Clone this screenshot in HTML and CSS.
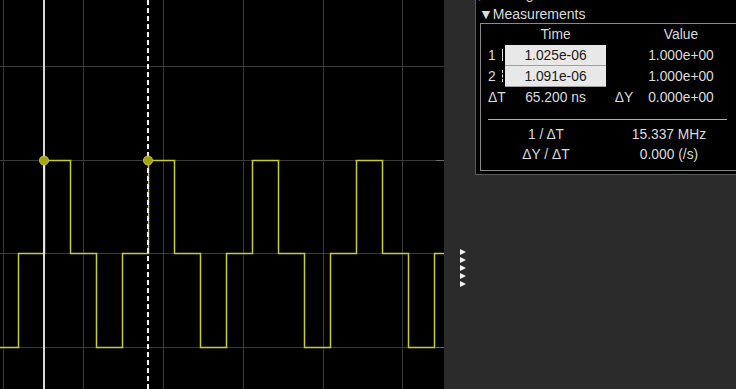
FILE: index.html
```html
<!DOCTYPE html>
<html lang="en">
<head>
    <meta charset="UTF-8">
    <meta name="viewport" content="width=device-width, initial-scale=1.0">
    <title>Scope Measurements</title>
    <link rel="stylesheet" href="styles.css">
</head>
<body>
    <div class="app">
        <svg class="plot" width="444" height="389" viewBox="0 0 444 389">
            <rect x="0" y="0" width="444" height="389" fill="#000"/>
            <g stroke="#3a3a3a" stroke-width="1">
                <line x1="3.5" y1="0" x2="3.5" y2="389"/>
                <line x1="83.5" y1="0" x2="83.5" y2="389"/>
                <line x1="163.5" y1="0" x2="163.5" y2="389"/>
                <line x1="243.5" y1="0" x2="243.5" y2="389"/>
                <line x1="323.5" y1="0" x2="323.5" y2="389"/>
                <line x1="402.5" y1="0" x2="402.5" y2="389"/>
                <line x1="0" y1="66.5" x2="444" y2="66.5"/>
                <line x1="0" y1="160.5" x2="444" y2="160.5"/>
                <line x1="0" y1="253.5" x2="444" y2="253.5"/>
                <line x1="0" y1="347.5" x2="444" y2="347.5"/>
            </g>
            <g stroke="#6a6a6a" stroke-width="1">
                <line x1="436" y1="160.5" x2="444" y2="160.5"/>
                <line x1="436" y1="253.5" x2="444" y2="253.5"/>
                <line x1="436" y1="347.5" x2="444" y2="347.5"/>
            </g>
            <path d="M0,347.5 H18.5 V253.5 H44.5 V160.5 H70.5 V253.5 H96.5 V347.5 H122.5 V253.5 H148.5 V160.5 H174.5 V253.5 H200.5 V347.5 H226.5 V253.5 H252.5 V160.5 H278.5 V253.5 H304.5 V347.5 H330.5 V253.5 H356.5 V160.5 H382.5 V253.5 H408.5 V347.5 H434.5 V253.5 H444"
                  fill="none" stroke="#c9c93a" stroke-width="1.5"/>
            <line x1="44" y1="0" x2="44" y2="389" stroke="#f0f0f0" stroke-width="1.8"/>
            <line x1="148" y1="0" x2="148" y2="389" stroke="#f0f0f0" stroke-width="2" stroke-dasharray="5 3"/>
            <circle cx="44" cy="160.5" r="4.5" fill="#a3a314" stroke="#c9c93a" stroke-width="1"/>
            <circle cx="148" cy="160.5" r="4.5" fill="#a3a314" stroke="#c9c93a" stroke-width="1"/>
        </svg>

        <div class="gutter">
            <span class="marker"></span>
            <span class="marker"></span>
            <span class="marker"></span>
            <span class="marker"></span>
            <span class="marker"></span>
        </div>

        <div class="side">
            <div class="panel">
                <div class="section-title">&#9654;Settings</div>
                <div class="section-title">&#9660;Measurements</div>

                <div class="meas">
                    <div class="meas-grid">
                        <span></span>
                        <span class="head">Time</span>
                        <span></span>
                        <span class="head">Value</span>

                        <span class="lbl">1<i class="cur solid"></i></span>
                        <span class="field">1.025e-06</span>
                        <span></span>
                        <span class="val">1.000e+00</span>

                        <span class="lbl">2<i class="cur dashed"></i></span>
                        <span class="field">1.091e-06</span>
                        <span></span>
                        <span class="val">1.000e+00</span>

                        <span class="lbl">&Delta;T</span>
                        <span class="val">65.200 ns</span>
                        <span class="val">&Delta;Y</span>
                        <span class="val">0.000e+00</span>
                    </div>

                    <div class="sep"></div>

                    <div class="rate-grid">
                        <span>1 / &Delta;T</span>
                        <span>15.337 MHz</span>
                        <span>&Delta;Y / &Delta;T</span>
                        <span>0.000 (/s)</span>
                    </div>
                </div>
            </div>
        </div>
    </div>
</body>
</html>
```

FILE: styles.css
```css
body {
    margin: 0;
    background-color: #2b2b2b;
    font-family: 'Liberation Sans', Arial, sans-serif;
    color: #dcdcdc;
    overflow: hidden;
}

.app {
    display: flex;
    width: 736px;
    height: 389px;
}

.plot {
    display: block;
    flex: none;
}

.gutter {
    width: 31px;
    flex: none;
    display: flex;
    flex-direction: column;
    align-items: center;
    gap: 2px;
    padding-top: 249px;
    box-sizing: border-box;
}

.marker {
    width: 0;
    height: 0;
    margin-left: 6px;
    border-top: 3px solid transparent;
    border-bottom: 3px solid transparent;
    border-left: 6px solid #f2f2f2;
}

.side {
    flex: 1;
    overflow: hidden;
}

.panel {
    margin-top: -16px;
    height: 191px;
    box-sizing: border-box;
    background-color: #000;
    border-left: 1px solid #5a5a5a;
    border-bottom: 1px solid #5a5a5a;
    padding-left: 4px;
}

.section-title {
    height: 20px;
    line-height: 20px;
    font-size: 14px;
    color: #dcdcdc;
    margin-left: -1px;
}

.meas {
    margin-top: -1px;
    height: 148px;
    box-sizing: border-box;
    border: 1px solid #8a8a8a;
    border-right: none;
    font-size: 13.8px;
}

.meas-grid {
    display: grid;
    grid-template-columns: 24px 101px 36px 78px;
    grid-auto-rows: 21px;
    align-items: center;
    text-align: center;
}

.meas-grid > span {
    height: 21px;
    line-height: 21px;
}

.lbl {
    text-align: left;
    padding-left: 7px;
}

.cur {
    display: inline-block;
    height: 12px;
    margin-left: 6px;
    vertical-align: -1px;
}

.cur.solid {
    border-left: 1px solid #dcdcdc;
}

.cur.dashed {
    border-left: 1px dashed #dcdcdc;
}

.field {
    background-color: #e8e8e8;
    color: #1a1a1a;
    border-bottom: 1px solid #a0a0a0;
    box-sizing: border-box;
}

.sep {
    height: 1px;
    background-color: #b0b0b0;
    margin: 11px 9px 5px 7px;
}

.rate-grid {
    display: grid;
    grid-template-columns: 126px 120px;
    grid-auto-rows: 20px;
    line-height: 20px;
    text-align: center;
    padding-left: 2px;
}
```
